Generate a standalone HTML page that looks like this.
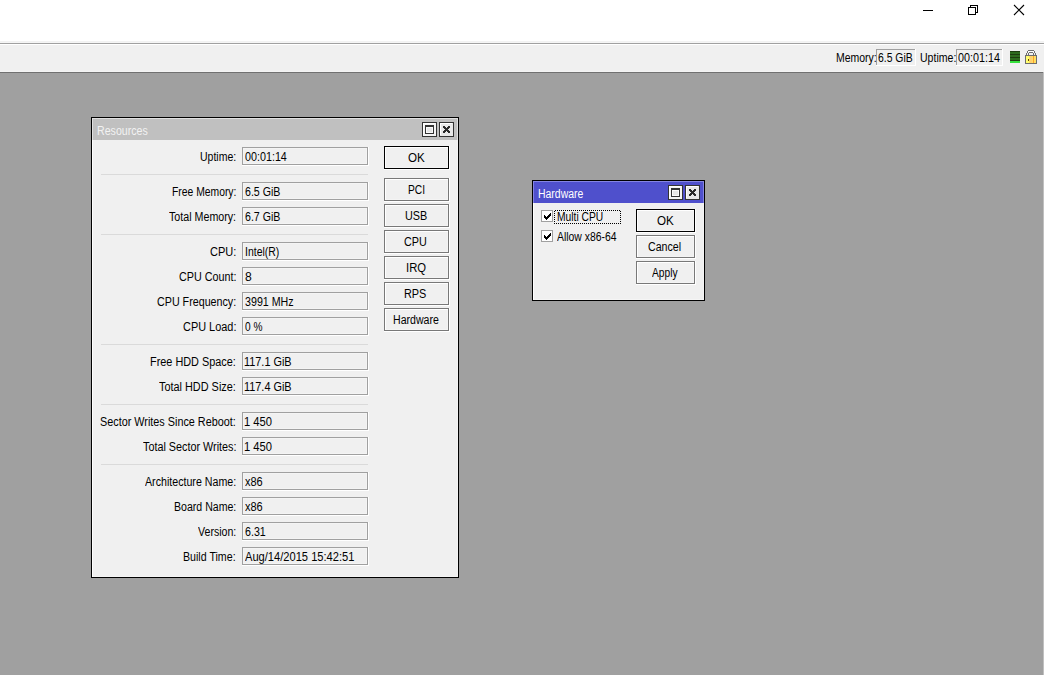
<!DOCTYPE html>
<html><head><meta charset="utf-8"><style>
html,body{margin:0;padding:0}
body{width:1044px;height:675px;position:relative;overflow:hidden;background:#a0a0a0;font-family:"Liberation Sans",sans-serif}
body>div,body>span{position:absolute}
.t{font-size:12px;line-height:12px;white-space:pre;transform-origin:0 0}
</style></head><body>
<div style="left:0px;top:0px;width:1044px;height:41px;background:#ffffff;"></div>
<div style="left:0px;top:41px;width:1044px;height:1px;background:#f2f2f2;"></div>
<div style="left:0px;top:42px;width:1044px;height:1px;background:#f5f5f5;"></div>
<div style="left:0px;top:43px;width:1044px;height:1px;background:#a0a0a0;"></div>
<div style="left:0px;top:44px;width:1044px;height:1px;background:#ffffff;"></div>
<div style="left:0px;top:45px;width:1044px;height:26px;background:#f0f0f0;"></div>
<div style="left:0px;top:71px;width:1044px;height:1px;background:#f3f3f3;"></div>
<div style="left:0px;top:72px;width:1044px;height:1px;background:#707070;"></div>
<div style="left:0px;top:73px;width:1044px;height:602px;background:#a0a0a0;"></div>
<div style="left:1043px;top:72px;width:1px;height:603px;background:#c0c0c0;"></div>
<div style="left:923px;top:10px;width:10px;height:1px;background:#000;"></div>
<div style="left:968px;top:7px;width:8px;height:8px;box-sizing:border-box;border:1px solid #000;background:transparent;"></div>
<div style="left:970px;top:5px;width:8px;height:1px;background:#000;"></div>
<div style="left:977px;top:5px;width:1px;height:8px;background:#000;"></div>
<div style="left:970px;top:5px;width:1px;height:2px;background:#000;"></div>
<div style="left:976px;top:12px;width:2px;height:1px;background:#000;"></div>
<svg style="position:absolute;left:1013px;top:4px" width="12" height="12" viewBox="0 0 12 12"><path d="M1 1L11 11M11 1L1 11" stroke="#000" stroke-width="1.1" fill="none"/></svg>
<div style="left:876px;top:49px;width:40px;height:1px;background:#a0a0a0;"></div><div style="left:876px;top:49px;width:1px;height:17px;background:#a0a0a0;"></div><div style="left:915px;top:49px;width:1px;height:17px;background:#ffffff;"></div><div style="left:876px;top:65px;width:40px;height:1px;background:#ffffff;"></div>
<div style="left:956px;top:49px;width:47px;height:1px;background:#a0a0a0;"></div><div style="left:956px;top:49px;width:1px;height:17px;background:#a0a0a0;"></div><div style="left:1002px;top:49px;width:1px;height:17px;background:#ffffff;"></div><div style="left:956px;top:65px;width:47px;height:1px;background:#ffffff;"></div>
<div style="left:1010px;top:51px;width:10px;height:1px;background:#1e3d10;"></div>
<div style="left:1010px;top:52px;width:10px;height:1px;background:#2e6b1e;"></div>
<div style="left:1010px;top:53px;width:10px;height:1px;background:#2e6b1e;"></div>
<div style="left:1010px;top:54px;width:10px;height:1px;background:#1e3d10;"></div>
<div style="left:1010px;top:55px;width:10px;height:1px;background:#2e6b1e;"></div>
<div style="left:1010px;top:56px;width:10px;height:1px;background:#2e6b1e;"></div>
<div style="left:1010px;top:57px;width:10px;height:1px;background:#1e3d10;"></div>
<div style="left:1010px;top:58px;width:10px;height:1px;background:#2e6b1e;"></div>
<div style="left:1010px;top:59px;width:10px;height:1px;background:#2e6b1e;"></div>
<div style="left:1010px;top:60px;width:10px;height:1px;background:#1e3d10;"></div>
<div style="left:1010px;top:61px;width:10px;height:1px;background:#35e03c;"></div>
<div style="left:1010px;top:62px;width:10px;height:1px;background:#35e03c;"></div>
<svg style="position:absolute;left:1024px;top:49px" width="14" height="16" viewBox="0 0 14 16" shape-rendering="crispEdges">
<rect x="4" y="1" width="6" height="1" fill="#6e6e6e"/>
<rect x="3" y="2" width="1" height="2" fill="#6e6e6e"/>
<rect x="10" y="2" width="1" height="2" fill="#6e6e6e"/>
<rect x="5" y="3" width="4" height="1" fill="#6e6e6e"/>
<rect x="4" y="2" width="6" height="1" fill="#ffffff"/>
<rect x="2" y="4" width="1" height="2" fill="#6e6e6e"/>
<rect x="4" y="4" width="1" height="2" fill="#6e6e6e"/>
<rect x="9" y="4" width="1" height="2" fill="#6e6e6e"/>
<rect x="11" y="4" width="1" height="2" fill="#6e6e6e"/>
<rect x="1" y="6" width="12" height="9" fill="#6e6e6e"/>
<rect x="2" y="7" width="10" height="7" fill="#ffe060"/>
<rect x="2" y="7" width="3" height="7" fill="#ffff70"/>
<rect x="6" y="7" width="2" height="7" fill="#ffd070"/>
<rect x="9" y="7" width="1" height="7" fill="#ffa030"/>
<rect x="4" y="10" width="1" height="2" fill="#604000"/>
</svg>
<div style="left:91px;top:117px;width:368px;height:461px;background:#000;"></div><div style="left:92px;top:118px;width:366px;height:459px;background:#f5f5f5;"></div><div style="left:92px;top:118px;width:1px;height:459px;background:#ffffff;"></div><div style="left:93px;top:119px;width:364px;height:457px;background:#f0f0f0;"></div><div style="left:92px;top:118px;width:366px;height:22px;background:#c0c0c0;"></div><div style="left:92px;top:118px;width:366px;height:1px;background:rgba(255,255,255,0.5)"></div><div style="left:92px;top:119px;width:1px;height:21px;background:rgba(255,255,255,0.5)"></div><div style="left:457px;top:119px;width:1px;height:21px;background:rgba(255,255,255,0.5)"></div><div style="left:422px;top:122px;width:15px;height:15px;background:#333333;"></div><div style="left:423px;top:123px;width:13px;height:13px;background:#f4f4f4;"></div><div style="left:423px;top:123px;width:12px;height:1px;background:#ffffff;"></div><div style="left:423px;top:123px;width:1px;height:12px;background:#ffffff;"></div><div style="left:425px;top:125px;width:9px;height:9px;background:#333333;"></div><div style="left:426px;top:127px;width:7px;height:6px;background:#fafafa;"></div><div style="left:427px;top:128px;width:5px;height:4px;background:#e6e6e6;"></div><div style="left:439px;top:122px;width:15px;height:15px;background:#333333;"></div><div style="left:440px;top:123px;width:13px;height:13px;background:#e8e8e8;"></div><div style="left:440px;top:123px;width:12px;height:1px;background:#ffffff;"></div><div style="left:440px;top:123px;width:1px;height:12px;background:#ffffff;"></div><svg style="position:absolute;left:443px;top:126px" width="7" height="7" shape-rendering="crispEdges"><path d="M0 0h1v1h-1zM0 1h1v1h-1zM0 5h1v1h-1zM0 6h1v1h-1zM1 0h1v1h-1zM1 1h1v1h-1zM1 2h1v1h-1zM1 4h1v1h-1zM1 5h1v1h-1zM1 6h1v1h-1zM2 1h1v1h-1zM2 2h1v1h-1zM2 3h1v1h-1zM2 4h1v1h-1zM2 5h1v1h-1zM3 2h1v1h-1zM3 3h1v1h-1zM3 4h1v1h-1zM4 1h1v1h-1zM4 2h1v1h-1zM4 3h1v1h-1zM4 4h1v1h-1zM4 5h1v1h-1zM5 0h1v1h-1zM5 1h1v1h-1zM5 2h1v1h-1zM5 4h1v1h-1zM5 5h1v1h-1zM5 6h1v1h-1zM6 0h1v1h-1zM6 1h1v1h-1zM6 5h1v1h-1zM6 6h1v1h-1z" fill="#2a2a2a"/></svg>
<div style="left:532px;top:180px;width:173px;height:121px;background:#000;"></div><div style="left:533px;top:181px;width:171px;height:119px;background:#f5f5f5;"></div><div style="left:533px;top:181px;width:1px;height:119px;background:#ffffff;"></div><div style="left:534px;top:182px;width:169px;height:117px;background:#f0f0f0;"></div><div style="left:533px;top:181px;width:171px;height:22px;background:#4f50cc;"></div><div style="left:533px;top:181px;width:171px;height:1px;background:#8484e2"></div><div style="left:533px;top:182px;width:1px;height:21px;background:#8484e2"></div><div style="left:703px;top:182px;width:1px;height:21px;background:#8484e2"></div><div style="left:668px;top:185px;width:15px;height:15px;background:#333333;"></div><div style="left:669px;top:186px;width:13px;height:13px;background:#f4f4f4;"></div><div style="left:669px;top:186px;width:12px;height:1px;background:#ffffff;"></div><div style="left:669px;top:186px;width:1px;height:12px;background:#ffffff;"></div><div style="left:671px;top:188px;width:9px;height:9px;background:#333333;"></div><div style="left:672px;top:190px;width:7px;height:6px;background:#fafafa;"></div><div style="left:673px;top:191px;width:5px;height:4px;background:#e6e6e6;"></div><div style="left:685px;top:185px;width:15px;height:15px;background:#333333;"></div><div style="left:686px;top:186px;width:13px;height:13px;background:#e8e8e8;"></div><div style="left:686px;top:186px;width:12px;height:1px;background:#ffffff;"></div><div style="left:686px;top:186px;width:1px;height:12px;background:#ffffff;"></div><svg style="position:absolute;left:689px;top:189px" width="7" height="7" shape-rendering="crispEdges"><path d="M0 0h1v1h-1zM0 1h1v1h-1zM0 5h1v1h-1zM0 6h1v1h-1zM1 0h1v1h-1zM1 1h1v1h-1zM1 2h1v1h-1zM1 4h1v1h-1zM1 5h1v1h-1zM1 6h1v1h-1zM2 1h1v1h-1zM2 2h1v1h-1zM2 3h1v1h-1zM2 4h1v1h-1zM2 5h1v1h-1zM3 2h1v1h-1zM3 3h1v1h-1zM3 4h1v1h-1zM4 1h1v1h-1zM4 2h1v1h-1zM4 3h1v1h-1zM4 4h1v1h-1zM4 5h1v1h-1zM5 0h1v1h-1zM5 1h1v1h-1zM5 2h1v1h-1zM5 4h1v1h-1zM5 5h1v1h-1zM5 6h1v1h-1zM6 0h1v1h-1zM6 1h1v1h-1zM6 5h1v1h-1zM6 6h1v1h-1z" fill="#2a2a2a"/></svg>
<div style="left:242px;top:147px;width:127px;height:19px;background:#ffffff;"></div><div style="left:242px;top:147px;width:126px;height:18px;background:#a0a0a0;"></div><div style="left:243px;top:148px;width:124px;height:16px;background:#f4f4f4;"></div><div style="left:244px;top:149px;width:122px;height:14px;background:#f0f0f0;"></div>
<div style="left:242px;top:182px;width:127px;height:19px;background:#ffffff;"></div><div style="left:242px;top:182px;width:126px;height:18px;background:#a0a0a0;"></div><div style="left:243px;top:183px;width:124px;height:16px;background:#f4f4f4;"></div><div style="left:244px;top:184px;width:122px;height:14px;background:#f0f0f0;"></div>
<div style="left:242px;top:207px;width:127px;height:19px;background:#ffffff;"></div><div style="left:242px;top:207px;width:126px;height:18px;background:#a0a0a0;"></div><div style="left:243px;top:208px;width:124px;height:16px;background:#f4f4f4;"></div><div style="left:244px;top:209px;width:122px;height:14px;background:#f0f0f0;"></div>
<div style="left:242px;top:242px;width:127px;height:19px;background:#ffffff;"></div><div style="left:242px;top:242px;width:126px;height:18px;background:#a0a0a0;"></div><div style="left:243px;top:243px;width:124px;height:16px;background:#f4f4f4;"></div><div style="left:244px;top:244px;width:122px;height:14px;background:#f0f0f0;"></div>
<div style="left:242px;top:267px;width:127px;height:19px;background:#ffffff;"></div><div style="left:242px;top:267px;width:126px;height:18px;background:#a0a0a0;"></div><div style="left:243px;top:268px;width:124px;height:16px;background:#f4f4f4;"></div><div style="left:244px;top:269px;width:122px;height:14px;background:#f0f0f0;"></div>
<div style="left:242px;top:292px;width:127px;height:19px;background:#ffffff;"></div><div style="left:242px;top:292px;width:126px;height:18px;background:#a0a0a0;"></div><div style="left:243px;top:293px;width:124px;height:16px;background:#f4f4f4;"></div><div style="left:244px;top:294px;width:122px;height:14px;background:#f0f0f0;"></div>
<div style="left:242px;top:317px;width:127px;height:19px;background:#ffffff;"></div><div style="left:242px;top:317px;width:126px;height:18px;background:#a0a0a0;"></div><div style="left:243px;top:318px;width:124px;height:16px;background:#f4f4f4;"></div><div style="left:244px;top:319px;width:122px;height:14px;background:#f0f0f0;"></div>
<div style="left:242px;top:352px;width:127px;height:19px;background:#ffffff;"></div><div style="left:242px;top:352px;width:126px;height:18px;background:#a0a0a0;"></div><div style="left:243px;top:353px;width:124px;height:16px;background:#f4f4f4;"></div><div style="left:244px;top:354px;width:122px;height:14px;background:#f0f0f0;"></div>
<div style="left:242px;top:377px;width:127px;height:19px;background:#ffffff;"></div><div style="left:242px;top:377px;width:126px;height:18px;background:#a0a0a0;"></div><div style="left:243px;top:378px;width:124px;height:16px;background:#f4f4f4;"></div><div style="left:244px;top:379px;width:122px;height:14px;background:#f0f0f0;"></div>
<div style="left:242px;top:412px;width:127px;height:19px;background:#ffffff;"></div><div style="left:242px;top:412px;width:126px;height:18px;background:#a0a0a0;"></div><div style="left:243px;top:413px;width:124px;height:16px;background:#f4f4f4;"></div><div style="left:244px;top:414px;width:122px;height:14px;background:#f0f0f0;"></div>
<div style="left:242px;top:437px;width:127px;height:19px;background:#ffffff;"></div><div style="left:242px;top:437px;width:126px;height:18px;background:#a0a0a0;"></div><div style="left:243px;top:438px;width:124px;height:16px;background:#f4f4f4;"></div><div style="left:244px;top:439px;width:122px;height:14px;background:#f0f0f0;"></div>
<div style="left:242px;top:472px;width:127px;height:19px;background:#ffffff;"></div><div style="left:242px;top:472px;width:126px;height:18px;background:#a0a0a0;"></div><div style="left:243px;top:473px;width:124px;height:16px;background:#f4f4f4;"></div><div style="left:244px;top:474px;width:122px;height:14px;background:#f0f0f0;"></div>
<div style="left:242px;top:497px;width:127px;height:19px;background:#ffffff;"></div><div style="left:242px;top:497px;width:126px;height:18px;background:#a0a0a0;"></div><div style="left:243px;top:498px;width:124px;height:16px;background:#f4f4f4;"></div><div style="left:244px;top:499px;width:122px;height:14px;background:#f0f0f0;"></div>
<div style="left:242px;top:522px;width:127px;height:19px;background:#ffffff;"></div><div style="left:242px;top:522px;width:126px;height:18px;background:#a0a0a0;"></div><div style="left:243px;top:523px;width:124px;height:16px;background:#f4f4f4;"></div><div style="left:244px;top:524px;width:122px;height:14px;background:#f0f0f0;"></div>
<div style="left:242px;top:547px;width:127px;height:19px;background:#ffffff;"></div><div style="left:242px;top:547px;width:126px;height:18px;background:#a0a0a0;"></div><div style="left:243px;top:548px;width:124px;height:16px;background:#f4f4f4;"></div><div style="left:244px;top:549px;width:122px;height:14px;background:#f0f0f0;"></div>
<div style="left:101px;top:174px;width:267px;height:1px;background:#dadada;"></div>
<div style="left:101px;top:234px;width:267px;height:1px;background:#dadada;"></div>
<div style="left:101px;top:344px;width:267px;height:1px;background:#dadada;"></div>
<div style="left:101px;top:404px;width:267px;height:1px;background:#dadada;"></div>
<div style="left:101px;top:464px;width:267px;height:1px;background:#dadada;"></div>
<div style="left:384px;top:146px;width:66px;height:24px;background:#ffffff;"></div><div style="left:384px;top:146px;width:65px;height:23px;background:#000;"></div><div style="left:385px;top:147px;width:63px;height:21px;background:#ffffff;"></div><div style="left:386px;top:148px;width:62px;height:20px;background:#f4f4f4;"></div><div style="left:386px;top:148px;width:61px;height:19px;background:#f0f0f0;"></div>
<div style="left:384px;top:178px;width:66px;height:24px;background:#ffffff;"></div><div style="left:384px;top:178px;width:65px;height:23px;background:#787878;"></div><div style="left:385px;top:179px;width:63px;height:21px;background:#ffffff;"></div><div style="left:386px;top:180px;width:62px;height:20px;background:#f4f4f4;"></div><div style="left:386px;top:180px;width:61px;height:19px;background:#f0f0f0;"></div>
<div style="left:384px;top:204px;width:66px;height:24px;background:#ffffff;"></div><div style="left:384px;top:204px;width:65px;height:23px;background:#787878;"></div><div style="left:385px;top:205px;width:63px;height:21px;background:#ffffff;"></div><div style="left:386px;top:206px;width:62px;height:20px;background:#f4f4f4;"></div><div style="left:386px;top:206px;width:61px;height:19px;background:#f0f0f0;"></div>
<div style="left:384px;top:230px;width:66px;height:24px;background:#ffffff;"></div><div style="left:384px;top:230px;width:65px;height:23px;background:#787878;"></div><div style="left:385px;top:231px;width:63px;height:21px;background:#ffffff;"></div><div style="left:386px;top:232px;width:62px;height:20px;background:#f4f4f4;"></div><div style="left:386px;top:232px;width:61px;height:19px;background:#f0f0f0;"></div>
<div style="left:384px;top:256px;width:66px;height:24px;background:#ffffff;"></div><div style="left:384px;top:256px;width:65px;height:23px;background:#787878;"></div><div style="left:385px;top:257px;width:63px;height:21px;background:#ffffff;"></div><div style="left:386px;top:258px;width:62px;height:20px;background:#f4f4f4;"></div><div style="left:386px;top:258px;width:61px;height:19px;background:#f0f0f0;"></div>
<div style="left:384px;top:282px;width:66px;height:24px;background:#ffffff;"></div><div style="left:384px;top:282px;width:65px;height:23px;background:#787878;"></div><div style="left:385px;top:283px;width:63px;height:21px;background:#ffffff;"></div><div style="left:386px;top:284px;width:62px;height:20px;background:#f4f4f4;"></div><div style="left:386px;top:284px;width:61px;height:19px;background:#f0f0f0;"></div>
<div style="left:384px;top:308px;width:66px;height:24px;background:#ffffff;"></div><div style="left:384px;top:308px;width:65px;height:23px;background:#787878;"></div><div style="left:385px;top:309px;width:63px;height:21px;background:#ffffff;"></div><div style="left:386px;top:310px;width:62px;height:20px;background:#f4f4f4;"></div><div style="left:386px;top:310px;width:61px;height:19px;background:#f0f0f0;"></div>
<div style="left:636px;top:209px;width:60px;height:24px;background:#ffffff;"></div><div style="left:636px;top:209px;width:59px;height:23px;background:#000;"></div><div style="left:637px;top:210px;width:57px;height:21px;background:#ffffff;"></div><div style="left:638px;top:211px;width:56px;height:20px;background:#f4f4f4;"></div><div style="left:638px;top:211px;width:55px;height:19px;background:#f0f0f0;"></div>
<div style="left:636px;top:235px;width:60px;height:24px;background:#ffffff;"></div><div style="left:636px;top:235px;width:59px;height:23px;background:#787878;"></div><div style="left:637px;top:236px;width:57px;height:21px;background:#ffffff;"></div><div style="left:638px;top:237px;width:56px;height:20px;background:#f4f4f4;"></div><div style="left:638px;top:237px;width:55px;height:19px;background:#f0f0f0;"></div>
<div style="left:636px;top:261px;width:60px;height:24px;background:#ffffff;"></div><div style="left:636px;top:261px;width:59px;height:23px;background:#787878;"></div><div style="left:637px;top:262px;width:57px;height:21px;background:#ffffff;"></div><div style="left:638px;top:263px;width:56px;height:20px;background:#f4f4f4;"></div><div style="left:638px;top:263px;width:55px;height:19px;background:#f0f0f0;"></div>
<div style="left:541px;top:210px;width:12px;height:12px;background:#a0a0a0;"></div><div style="left:542px;top:211px;width:10px;height:10px;background:#ffffff;"></div><div style="left:544px;top:215px;width:1px;height:3px;background:#000;"></div><div style="left:545px;top:216px;width:1px;height:3px;background:#000;"></div><div style="left:546px;top:217px;width:1px;height:3px;background:#000;"></div><div style="left:547px;top:216px;width:1px;height:3px;background:#000;"></div><div style="left:548px;top:215px;width:1px;height:3px;background:#000;"></div><div style="left:549px;top:214px;width:1px;height:3px;background:#000;"></div><div style="left:550px;top:213px;width:1px;height:3px;background:#000;"></div>
<div style="left:541px;top:230px;width:12px;height:12px;background:#a0a0a0;"></div><div style="left:542px;top:231px;width:10px;height:10px;background:#ffffff;"></div><div style="left:544px;top:235px;width:1px;height:3px;background:#000;"></div><div style="left:545px;top:236px;width:1px;height:3px;background:#000;"></div><div style="left:546px;top:237px;width:1px;height:3px;background:#000;"></div><div style="left:547px;top:236px;width:1px;height:3px;background:#000;"></div><div style="left:548px;top:235px;width:1px;height:3px;background:#000;"></div><div style="left:549px;top:234px;width:1px;height:3px;background:#000;"></div><div style="left:550px;top:233px;width:1px;height:3px;background:#000;"></div>
<svg style="position:absolute;left:554px;top:210px" width="67" height="14" shape-rendering="crispEdges"><path d="M0 1h1v1h-1zM0 3h1v1h-1zM0 5h1v1h-1zM0 7h1v1h-1zM0 9h1v1h-1zM0 11h1v1h-1zM0 13h1v1h-1zM1 0h1v1h-1zM2 13h1v1h-1zM3 0h1v1h-1zM4 13h1v1h-1zM5 0h1v1h-1zM6 13h1v1h-1zM7 0h1v1h-1zM8 13h1v1h-1zM9 0h1v1h-1zM10 13h1v1h-1zM11 0h1v1h-1zM12 13h1v1h-1zM13 0h1v1h-1zM14 13h1v1h-1zM15 0h1v1h-1zM16 13h1v1h-1zM17 0h1v1h-1zM18 13h1v1h-1zM19 0h1v1h-1zM20 13h1v1h-1zM21 0h1v1h-1zM22 13h1v1h-1zM23 0h1v1h-1zM24 13h1v1h-1zM25 0h1v1h-1zM26 13h1v1h-1zM27 0h1v1h-1zM28 13h1v1h-1zM29 0h1v1h-1zM30 13h1v1h-1zM31 0h1v1h-1zM32 13h1v1h-1zM33 0h1v1h-1zM34 13h1v1h-1zM35 0h1v1h-1zM36 13h1v1h-1zM37 0h1v1h-1zM38 13h1v1h-1zM39 0h1v1h-1zM40 13h1v1h-1zM41 0h1v1h-1zM42 13h1v1h-1zM43 0h1v1h-1zM44 13h1v1h-1zM45 0h1v1h-1zM46 13h1v1h-1zM47 0h1v1h-1zM48 13h1v1h-1zM49 0h1v1h-1zM50 13h1v1h-1zM51 0h1v1h-1zM52 13h1v1h-1zM53 0h1v1h-1zM54 13h1v1h-1zM55 0h1v1h-1zM56 13h1v1h-1zM57 0h1v1h-1zM58 13h1v1h-1zM59 0h1v1h-1zM60 13h1v1h-1zM61 0h1v1h-1zM62 13h1v1h-1zM63 0h1v1h-1zM64 13h1v1h-1zM65 0h1v1h-1zM66 1h1v1h-1zM66 3h1v1h-1zM66 5h1v1h-1zM66 7h1v1h-1zM66 9h1v1h-1zM66 11h1v1h-1zM66 13h1v1h-1z" fill="#000"/></svg>
<span class="t" style="left:835.52px;top:52px;color:#000;transform:scaleX(0.8729)">Memory:</span>
<span class="t" style="left:878.13px;top:52px;color:#000;transform:scaleX(0.8671)">6.5 GiB</span>
<span class="t" style="left:919.75px;top:52px;color:#000;transform:scaleX(0.879)">Uptime:</span>
<span class="t" style="left:957.92px;top:52px;color:#000;transform:scaleX(0.8978)">00:01:14</span>
<span class="t" style="left:97.01px;top:125px;color:#f2f2f2;transform:scaleX(0.8846)">Resources</span>
<span class="t" style="left:199.85px;top:151px;color:#000;transform:scaleX(0.8738)">Uptime:</span>
<span class="t" style="left:171.64px;top:186px;color:#000;transform:scaleX(0.8627)">Free Memory:</span>
<span class="t" style="left:168.91px;top:211px;color:#000;transform:scaleX(0.8904)">Total Memory:</span>
<span class="t" style="left:209.8px;top:246px;color:#000;transform:scaleX(0.9179)">CPU:</span>
<span class="t" style="left:178.71px;top:271px;color:#000;transform:scaleX(0.8978)">CPU Count:</span>
<span class="t" style="left:156.91px;top:296px;color:#000;transform:scaleX(0.8929)">CPU Frequency:</span>
<span class="t" style="left:182.7px;top:321px;color:#000;transform:scaleX(0.9102)">CPU Load:</span>
<span class="t" style="left:150.29px;top:356px;color:#000;transform:scaleX(0.9064)">Free HDD Space:</span>
<span class="t" style="left:159.3px;top:381px;color:#000;transform:scaleX(0.907)">Total HDD Size:</span>
<span class="t" style="left:100.15px;top:416px;color:#000;transform:scaleX(0.9022)">Sector Writes Since Reboot:</span>
<span class="t" style="left:142.61px;top:441px;color:#000;transform:scaleX(0.9003)">Total Sector Writes:</span>
<span class="t" style="left:144.91px;top:476px;color:#000;transform:scaleX(0.8879)">Architecture Name:</span>
<span class="t" style="left:173.82px;top:501px;color:#000;transform:scaleX(0.8809)">Board Name:</span>
<span class="t" style="left:197.71px;top:526px;color:#000;transform:scaleX(0.8832)">Version:</span>
<span class="t" style="left:183.41px;top:551px;color:#000;transform:scaleX(0.8861)">Build Time:</span>
<span class="t" style="left:244.82px;top:151px;color:#000;transform:scaleX(0.8956)">00:01:14</span>
<span class="t" style="left:244.71px;top:186px;color:#000;transform:scaleX(0.8852)">6.5 GiB</span>
<span class="t" style="left:244.71px;top:211px;color:#000;transform:scaleX(0.8852)">6.7 GiB</span>
<span class="t" style="left:244.91px;top:246px;color:#000;transform:scaleX(0.872)">Intel(R)</span>
<span class="t" style="left:244.69px;top:271px;color:#000;transform:scaleX(1.0094)">8</span>
<span class="t" style="left:244.69px;top:296px;color:#000;transform:scaleX(0.8899)">3991 MHz</span>
<span class="t" style="left:244.85px;top:321px;color:#000;transform:scaleX(0.8443)">0 %</span>
<span class="t" style="left:244.31px;top:356px;color:#000;transform:scaleX(0.9077)">117.1 GiB</span>
<span class="t" style="left:244.31px;top:381px;color:#000;transform:scaleX(0.9077)">117.4 GiB</span>
<span class="t" style="left:244.28px;top:416px;color:#000;transform:scaleX(0.9331)">1 450</span>
<span class="t" style="left:244.28px;top:441px;color:#000;transform:scaleX(0.9331)">1 450</span>
<span class="t" style="left:244.84px;top:476px;color:#000;transform:scaleX(0.9156)">x86</span>
<span class="t" style="left:244.84px;top:501px;color:#000;transform:scaleX(0.9156)">x86</span>
<span class="t" style="left:244.71px;top:526px;color:#000;transform:scaleX(0.8883)">6.31</span>
<span class="t" style="left:245.0px;top:551px;color:#000;transform:scaleX(0.9264)">Aug/14/2015 15:42:51</span>
<span class="t" style="left:408.01px;top:152px;color:#000;transform:scaleX(0.9674)">OK</span>
<span class="t" style="left:407.85px;top:184px;color:#000;transform:scaleX(0.8536)">PCI</span>
<span class="t" style="left:404.72px;top:210px;color:#000;transform:scaleX(0.9027)">USB</span>
<span class="t" style="left:404.11px;top:236px;color:#000;transform:scaleX(0.9005)">CPU</span>
<span class="t" style="left:405.83px;top:262px;color:#000;transform:scaleX(0.9384)">IRQ</span>
<span class="t" style="left:404.29px;top:288px;color:#000;transform:scaleX(0.9061)">RPS</span>
<span class="t" style="left:392.72px;top:314px;color:#000;transform:scaleX(0.8803)">Hardware</span>
<span class="t" style="left:538.03px;top:188px;color:#ffffff;transform:scaleX(0.8703)">Hardware</span>
<span class="t" style="left:556.84px;top:211px;color:#000;transform:scaleX(0.8551)">Multi CPU</span>
<span class="t" style="left:557.12px;top:231px;color:#000;transform:scaleX(0.8663)">Allow x86-64</span>
<span class="t" style="left:656.81px;top:215px;color:#000;transform:scaleX(0.9674)">OK</span>
<span class="t" style="left:647.92px;top:241px;color:#000;transform:scaleX(0.8864)">Cancel</span>
<span class="t" style="left:651.93px;top:267px;color:#000;transform:scaleX(0.8498)">Apply</span>
</body></html>
